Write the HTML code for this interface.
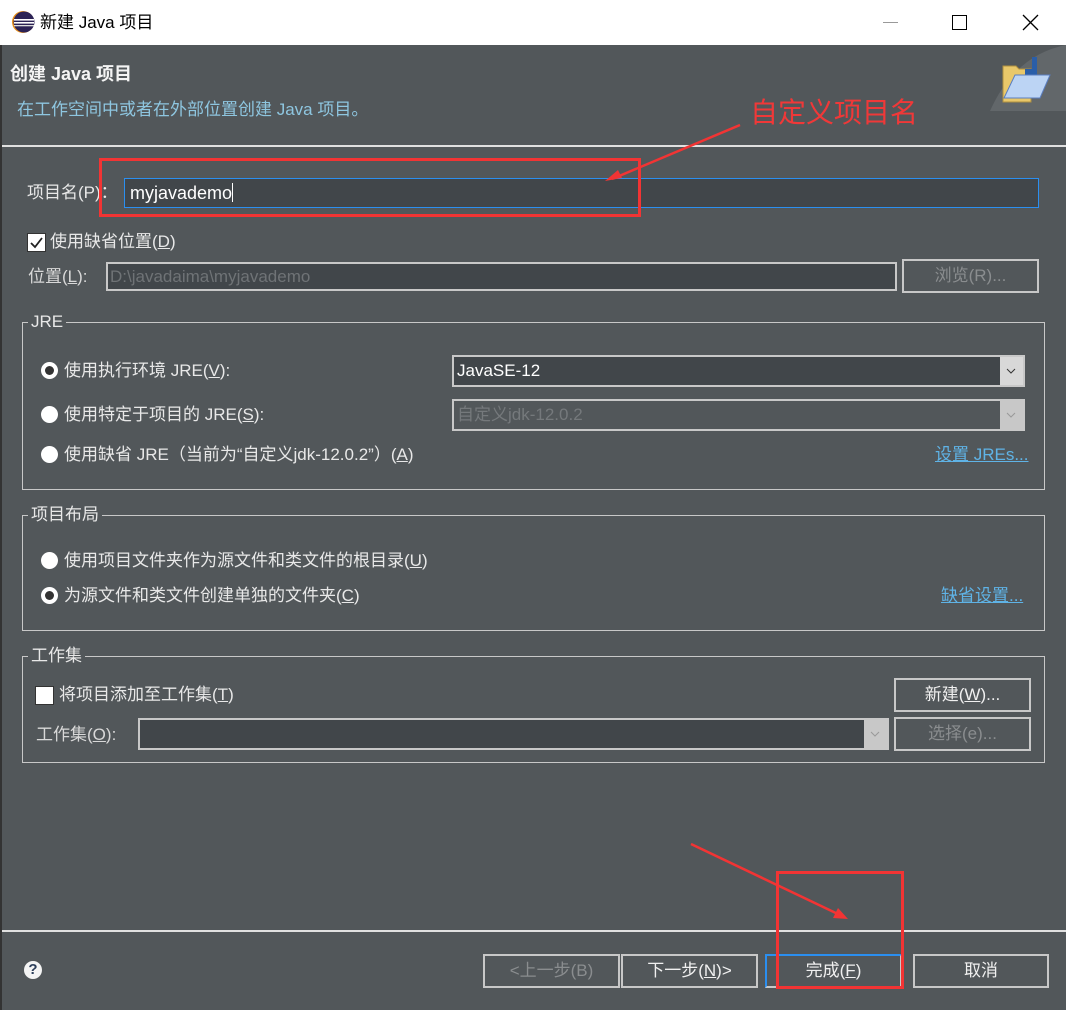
<!DOCTYPE html>
<html><head><meta charset="utf-8">
<style>
*{box-sizing:border-box;margin:0;padding:0}
body{width:1066px;height:1010px;overflow:hidden;background:#52575a;font-family:"Liberation Sans","Microsoft YaHei","Noto Sans CJK SC",sans-serif;font-size:17px;color:#e8e8e8;position:relative}
.a{position:absolute;white-space:nowrap}
.t{line-height:20px}
.inp{position:absolute;background:#41464a;border:2px solid #c8c8c8}
.btn{position:absolute;border:2px solid #c8c8c8;text-align:center;line-height:29px;color:#f0f0f0}
.dis{color:#8a8d8f}
.grp{position:absolute;border:1px solid #c8c8c8}
.glab{position:absolute;background:#52575a;padding:0 3px;line-height:20px;top:-11px;left:5px}
.rad{position:absolute;width:17px;height:17px;border-radius:50%;background:#fff}
.rad.on::after{content:"";position:absolute;left:4px;top:4px;width:9px;height:9px;border-radius:50%;background:#333}
.cb{position:absolute;background:#fff;border:1px solid #333}
.link{color:#5fb3e6;text-decoration:underline}
.dd{position:absolute;right:0;top:0;bottom:0;width:23px;background:#d8d8d8}
u{text-decoration:underline}
</style></head><body>
<div class="a" style="left:0;top:0;width:1066px;height:45px;background:#fff"></div>
<svg class="a" style="left:11px;top:10px" width="24" height="24" viewBox="0 0 24 24">
<circle cx="12" cy="12" r="11" fill="#e8901c"/><circle cx="13" cy="12" r="10.5" fill="#2c2255"/>
<rect x="3" y="9" width="20" height="1.6" fill="#fff"/><rect x="3" y="12" width="20" height="1.6" fill="#fff"/><rect x="3" y="15" width="20" height="1.3" fill="#ddd"/>
</svg>
<div class="a" style="left:40px;top:12px;color:#000;font-size:17px;line-height:22px">新建 Java 项目</div>
<div class="a" style="left:883px;top:22px;width:15px;height:1px;background:#999"></div>
<div class="a" style="left:952px;top:15px;width:15px;height:15px;border:1.5px solid #000"></div>
<svg class="a" style="left:1022px;top:14px" width="17" height="17"><path d="M1 1L16 16M16 1L1 16" stroke="#000" stroke-width="1.3"/></svg>

<div class="a" style="left:0;top:45px;width:2px;height:965px;background:#333"></div>
<div class="a" style="left:10px;top:63px;font-weight:bold;font-size:18px;line-height:22px;color:#f4f4f4">创建 Java 项目</div>
<div class="a" style="left:17px;top:99px;color:#8ec6e0;font-size:17px;line-height:22px">在工作空间中或者在外部位置创建 Java 项目。</div>
<svg class="a" style="left:990px;top:45px" width="76" height="66" viewBox="0 0 76 66">
<path d="M0 66 Q25 10 76 0 L76 66Z" fill="#62676a"/>
<path d="M13 21 h13 l3 3 h12 v33 h-28z" fill="#e9c86a" stroke="#b09040"/>
<rect x="42" y="12" width="5" height="18" fill="#2a5ea8"/><rect x="35" y="24" width="12" height="6" fill="#2a5ea8"/>
<path d="M25 30 h35 l-10 23 h-36z" fill="#bcd4f4" stroke="#5a7ec0"/>
</svg>
<div class="a" style="left:2px;top:145px;width:1064px;height:2px;background:#e0e0e0"></div>
<div class="a" style="left:750px;top:94px;color:#f03838;font-size:28px;line-height:34px;font-family:'Noto Sans CJK SC',sans-serif">自定义项目名</div>

<div class="a t" style="left:27px;top:183px">项目名(P)：</div>
<div class="inp" style="left:124px;top:178px;width:915px;height:30px;border:1.5px solid #2b8ff0"></div>
<div class="a t" style="left:130px;top:183px;color:#fff;font-size:18px">myjavademo<span style="display:inline-block;width:1px;height:19px;background:#fff;vertical-align:-3px"></span></div>
<div class="a" style="left:99px;top:158px;width:542px;height:59px;border:3px solid #f23434"></div>
<svg class="a" style="left:0;top:0" width="1066" height="1010" viewBox="0 0 1066 1010">
<path d="M740 125 L612 179" stroke="#f23434" stroke-width="2.5"/>
<path d="M605 181 L618 170 L622 178Z" fill="#f23434"/>
<path d="M691 844 L840 915" stroke="#f23434" stroke-width="2.5"/>
<path d="M848 919 L833 918 L838 908Z" fill="#f23434"/>
</svg>

<div class="cb" style="left:27px;top:233px;width:19px;height:19px"><svg width="17" height="17"><path d="M3 9l4 4 7-9" stroke="#222" stroke-width="1.8" fill="none"/></svg></div>
<div class="a t" style="left:50px;top:232px">使用缺省位置(<u>D</u>)</div>
<div class="a t" style="left:28px;top:267px;color:#d8d8d8">位置(<u>L</u>):</div>
<div class="inp" style="left:106px;top:262px;width:791px;height:29px"></div>
<div class="a t dis" style="left:110px;top:267px;color:#6f7376">D:\javadaima\myjavademo</div>
<div class="btn dis" style="left:902px;top:259px;width:137px;height:34px">浏览(R)...</div>

<div class="grp" style="left:22px;top:322px;width:1023px;height:168px"><div class="glab">JRE</div></div>
<div class="rad on" style="left:41px;top:362px"></div>
<div class="a t" style="left:64px;top:361px">使用执行环境 JRE(<u>V</u>):</div>
<div class="inp" style="left:452px;top:355px;width:573px;height:32px"><div class="dd"><svg width="23" height="28"><path d="M7 12l4 4 4-4" stroke="#333" fill="none"/></svg></div></div>
<div class="a t" style="left:457px;top:361px;color:#fff">JavaSE-12</div>
<div class="rad" style="left:41px;top:406px"></div>
<div class="a t" style="left:64px;top:405px">使用特定于项目的 JRE(<u>S</u>):</div>
<div class="inp" style="left:452px;top:399px;width:573px;height:32px;background:#52575a"><div class="dd" style="background:#c8c8c8"><svg width="23" height="28"><path d="M7 12l4 4 4-4" stroke="#999" fill="none"/></svg></div></div>
<div class="a t" style="left:457px;top:405px;color:#75797c">自定义jdk-12.0.2</div>
<div class="rad" style="left:41px;top:446px"></div>
<div class="a t" style="left:64px;top:445px">使用缺省 JRE（当前为“自定义jdk-12.0.2”）(<u>A</u>)</div>
<div class="a t link" style="left:935px;top:445px">设置 JREs...</div>

<div class="grp" style="left:22px;top:515px;width:1023px;height:116px"><div class="glab">项目布局</div></div>
<div class="rad" style="left:41px;top:552px"></div>
<div class="a t" style="left:64px;top:551px">使用项目文件夹作为源文件和类文件的根目录(<u>U</u>)</div>
<div class="rad on" style="left:41px;top:587px"></div>
<div class="a t" style="left:64px;top:586px">为源文件和类文件创建单独的文件夹(<u>C</u>)</div>
<div class="a t link" style="left:941px;top:586px">缺省设置...</div>

<div class="grp" style="left:22px;top:656px;width:1023px;height:107px"><div class="glab">工作集</div></div>
<div class="cb" style="left:35px;top:686px;width:19px;height:19px"></div>
<div class="a t" style="left:59px;top:685px">将项目添加至工作集(<u>T</u>)</div>
<div class="btn" style="left:894px;top:678px;width:137px;height:34px">新建(<u>W</u>)...</div>
<div class="a t" style="left:36px;top:725px;color:#d8d8d8">工作集(<u>O</u>):</div>
<div class="inp" style="left:138px;top:718px;width:751px;height:32px"><div class="dd" style="background:#c8c8c8"><svg width="23" height="28"><path d="M7 12l4 4 4-4" stroke="#999" fill="none"/></svg></div></div>
<div class="btn dis" style="left:894px;top:717px;width:137px;height:34px">选择(e)...</div>

<div class="a" style="left:2px;top:930px;width:1064px;height:2px;background:#e0e0e0"></div>
<div class="a" style="left:24px;top:961px;width:18px;height:18px;border-radius:50%;background:#f4f4f4;color:#2c3e5a;font-weight:bold;font-size:15px;line-height:18px;text-align:center">?</div>
<div class="btn dis" style="left:483px;top:954px;width:137px;height:34px">&lt;上一步(B)</div>
<div class="btn" style="left:621px;top:954px;width:137px;height:34px">下一步(<u>N</u>)&gt;</div>
<div class="btn" style="left:765px;top:954px;width:137px;height:34px;border-left-color:#2b8ff0;border-top-color:#2b8ff0">完成(<u>F</u>)</div>
<div class="btn" style="left:913px;top:954px;width:136px;height:34px">取消</div>
<div class="a" style="left:776px;top:871px;width:128px;height:118px;border:3px solid #f23434"></div>
</body></html>
